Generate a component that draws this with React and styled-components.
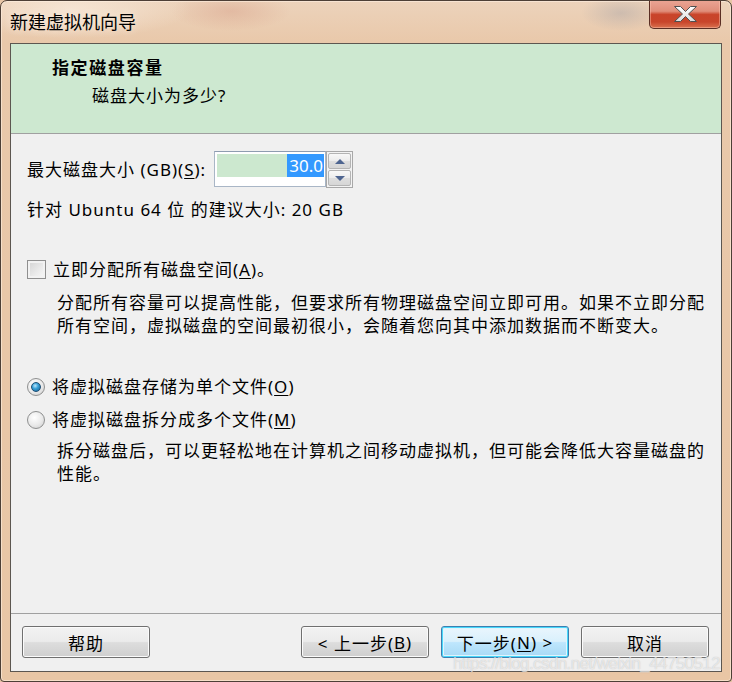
import styled, { createGlobalStyle, css } from "styled-components";

const GlobalStyle = createGlobalStyle`
    html, body {
        margin: 0;
        padding: 0;
        background: #e8c6a6;
    }
    * {
        box-sizing: border-box;
    }
`

const FONT = `"Noto Sans", "Noto Sans CJK SC", sans-serif`

const App = () => {
    return (
        <>
            <GlobalStyle />
            <Window>
                <TitleBar>
                    <Title>新建虚拟机向导</Title>
                    <CloseButton aria-label="close">
                        <svg width="25" height="18" viewBox="0 0 25 18">
                            <defs>
                                <linearGradient id="xg" x1="0" y1="0" x2="0" y2="1">
                                    <stop offset="0" stopColor="#ffffff" />
                                    <stop offset="1" stopColor="#dcdcdc" />
                                </linearGradient>
                            </defs>
                            <path
                                d="M1.5 1.5 H7.5 L12.5 6.5 L17.5 1.5 H23.5 L15.5 9 L23.5 16.5 H17.5 L12.5 11.5 L7.5 16.5 H1.5 L9.5 9 Z"
                                fill="url(#xg)"
                                stroke="#505050"
                                strokeWidth="1"
                                strokeLinejoin="round"
                            />
                        </svg>
                    </CloseButton>
                </TitleBar>

                <Client>
                    <Header>
                        <HeaderTitle>指定磁盘容量</HeaderTitle>
                        <HeaderSub>磁盘大小为多少?</HeaderSub>
                    </Header>

                    <Body>
                        <SizeRow>
                            <SizeLabel>最大磁盘大小 (GB)(<u>S</u>):</SizeLabel>
                            <SpinBox>
                                <Field>
                                    <FieldValue>
                                        <Selected>30.0</Selected>
                                    </FieldValue>
                                </Field>
                                <Spin>
                                    <SpinBtn><Arrow $dir="up" /></SpinBtn>
                                    <SpinBtn><Arrow $dir="down" /></SpinBtn>
                                </Spin>
                            </SpinBox>
                        </SizeRow>

                        <Suggest>针对 Ubuntu 64 位 的建议大小: 20 GB</Suggest>

                        <OptionRow style={{ marginTop: '37px' }}>
                            <CheckBox />
                            <span>立即分配所有磁盘空间(<u>A</u>)。</span>
                        </OptionRow>
                        <Note>
                            <Line>分配所有容量可以提高性能，但要求所有物理磁盘空间立即可用。如果不立即分配</Line>
                            <Line>所有空间，虚拟磁盘的空间最初很小，会随着您向其中添加数据而不断变大。</Line>
                        </Note>

                        <OptionRow style={{ marginTop: '38px' }}>
                            <Radio $checked />
                            <span>将虚拟磁盘存储为单个文件(<u>O</u>)</span>
                        </OptionRow>
                        <OptionRow style={{ marginTop: '10px' }}>
                            <Radio />
                            <span>将虚拟磁盘拆分成多个文件(<u>M</u>)</span>
                        </OptionRow>
                        <Note style={{ marginTop: '8px' }}>
                            <Line>拆分磁盘后，可以更轻松地在计算机之间移动虚拟机，但可能会降低大容量磁盘的</Line>
                            <Line>性能。</Line>
                        </Note>
                    </Body>

                    <Footer>
                        <Button>帮助</Button>
                        <RightButtons>
                            <Button>&lt; 上一步(<u>B</u>)</Button>
                            <Button $focused>下一步(<u>N</u>) &gt;</Button>
                            <Button>取消</Button>
                        </RightButtons>
                    </Footer>
                </Client>

                <Watermark>https://blog.csdn.net/weixin_44750512</Watermark>
            </Window>
        </>
    )
}

const Window = styled.div`
    position: relative;
    width: 732px;
    height: 682px;
    border: 1px solid #4d3f36;
    border-radius: 7px 7px 4px 4px;
    background:
        radial-gradient(ellipse 120px 30px at 70px 8px, rgba(250, 236, 222, 0.7), transparent),
        radial-gradient(ellipse 60px 20px at 230px 10px, rgba(200, 120, 100, 0.25), transparent),
        radial-gradient(ellipse 40px 18px at 620px 12px, rgba(150, 150, 160, 0.35), transparent),
        linear-gradient(to bottom, #ecd3bb 0px, #e9c8aa 42px, #e9c6a5 100%);
    box-shadow: inset 0 0 0 1px rgba(255, 240, 225, 0.6);
    display: flex;
    flex-direction: column;
    font-family: ${FONT};
    overflow: hidden;
`

const TitleBar = styled.div`
    height: 42px;
    display: flex;
    align-items: flex-start;
    padding-left: 9px;
`

const Title = styled.div`
    font-size: 18px;
    line-height: 42px;
    color: #000;
    text-shadow: 0 0 8px rgba(255, 245, 235, 0.9);
`

const CloseButton = styled.div`
    margin-left: auto;
    margin-right: 10px;
    margin-top: -1px;
    width: 72px;
    height: 29px;
    border: 1px solid #5a2e24;
    border-top: none;
    border-radius: 0 0 5px 5px;
    background: linear-gradient(
        to bottom,
        #eba595 0%,
        #e08e7a 40%,
        #c9442a 52%,
        #c8452b 78%,
        #d9714f 100%
    );
    box-shadow: inset 0 0 0 1px rgba(255, 200, 180, 0.45);
    display: flex;
    align-items: center;
    justify-content: center;
`

const Client = styled.div`
    margin: 0 9px;
    height: 629px;
    border: 1px solid #5c5650;
    background: #f0f0f0;
    display: flex;
    flex-direction: column;
`

const Header = styled.div`
    height: 90px;
    background: #cde8d0;
    border-bottom: 1px solid #a0a0a0;
    padding: 12px 0 0 41px;
`

const HeaderTitle = styled.div`
    font-size: 17px;
    font-weight: 700;
    line-height: 23px;
    letter-spacing: 1.6px;
    color: #000;
`

const HeaderSub = styled.div`
    margin-top: 5px;
    margin-left: 40px;
    font-size: 17px;
    line-height: 23px;
    letter-spacing: 1px;
    color: #000;
`

const Body = styled.div`
    flex: 1;
    padding: 17px 0 0 16px;
    font-size: 17px;
    letter-spacing: 1px;
    color: #000;

    u {
        text-underline-offset: 2px;
    }
`

const SizeRow = styled.div`
    display: flex;
    align-items: center;
    height: 36px;
`

const SizeLabel = styled.div`
    width: 187px;
    line-height: 23px;
    white-space: nowrap;
`

const SpinBox = styled.div`
    display: flex;
    height: 36px;
`

const Field = styled.div`
    width: 112px;
    height: 36px;
    border: 1px solid #a9b6c6;
    border-top-color: #8e9cb0;
    background: #fff;
    padding: 2px 1px 0 2px;
`

const FieldValue = styled.div`
    height: 23px;
    background: #cce8cf;
    display: flex;
    justify-content: flex-end;
`

const Selected = styled.span`
    background: #3399ff;
    color: #fff;
    line-height: 23px;
    padding: 0 1px 0 2px;
    letter-spacing: 0;
`

const Spin = styled.div`
    width: 27px;
    height: 37px;
    border: 1px solid #a8a8a8;
    display: flex;
    flex-direction: column;
    gap: 1px;
    padding: 1px;
    background: #f3f3f3;
`

const SpinBtn = styled.div`
    flex: 1;
    border: 1px solid #b4b4b4;
    border-radius: 2px;
    background: linear-gradient(to bottom, #f8f8f8 0%, #ececec 50%, #dedede 51%, #d6d6d6 100%);
    display: flex;
    align-items: center;
    justify-content: center;
`

const Arrow = styled.span`
    width: 0;
    height: 0;
    border-left: 5px solid transparent;
    border-right: 5px solid transparent;
    ${props => props.$dir === 'up'
        ? css`border-bottom: 5px solid #4e6590;`
        : css`border-top: 5px solid #4e6590;`}
`

const Suggest = styled.div`
    margin-top: 11px;
    line-height: 23px;
`

const OptionRow = styled.div`
    display: flex;
    align-items: center;
    gap: 7px;
    height: 23px;
    line-height: 23px;
    white-space: nowrap;
`

const CheckBox = styled.span`
    width: 19px;
    height: 19px;
    border: 1px solid #8f8f8f;
    background: linear-gradient(135deg, #d2d2d2 0%, #ebebeb 60%, #f8f8f8 100%);
    box-shadow: inset 0 0 0 2px #f2f2f2;
    flex-shrink: 0;
`

const Radio = styled.span`
    position: relative;
    width: 18px;
    height: 18px;
    border-radius: 50%;
    border: 1px solid #8e8f8f;
    background: radial-gradient(circle at 40% 35%, #ffffff 0%, #e9e9e9 55%, #c9c9c9 100%);
    flex-shrink: 0;

    ${props => props.$checked && css`
        &::after {
            content: '';
            position: absolute;
            left: 3px;
            top: 3px;
            width: 10px;
            height: 10px;
            border-radius: 50%;
            border: 1px solid #1d4e74;
            background: radial-gradient(circle at 40% 35%, #bfe6fb 0%, #3aa3d9 40%, #165c8e 100%);
            box-sizing: border-box;
        }
    `}
`

const Note = styled.div`
    margin-top: 10px;
    margin-left: 30px;
    line-height: 23px;
`

const Line = styled.div`
    white-space: nowrap;
`

const Footer = styled.div`
    height: 58px;
    border-top: 1px solid #a0a0a0;
    padding: 12px 12px 0 11px;
    display: flex;
    justify-content: space-between;
    align-items: flex-start;
`

const RightButtons = styled.div`
    display: flex;
    gap: 12px;
`

const Button = styled.div`
    width: 128px;
    height: 32px;
    border: 1px solid #707070;
    border-radius: 3px;
    background: linear-gradient(to bottom, #f2f2f2 0%, #ebebeb 48%, #dddddd 52%, #cfcfcf 100%);
    box-shadow: inset 0 0 0 1px #fbfbfb;
    display: flex;
    align-items: center;
    justify-content: center;
    font-size: 17px;
    letter-spacing: 1px;
    color: #000;
    white-space: nowrap;

    u {
        text-underline-offset: 2px;
    }

    ${props => props.$focused && css`
        border-color: #3c7fb1;
        background: linear-gradient(to bottom, #eaf6fd 0%, #d9f0fc 48%, #bee6fd 52%, #a7d9f5 100%);
        box-shadow: inset 0 0 0 1px #48d8fb, inset 0 0 0 2px #e0f4fd;
    `}
`

const Watermark = styled.div`
    position: absolute;
    left: 452px;
    top: 654px;
    font-family: "Liberation Sans", sans-serif;
    font-size: 17px;
    line-height: 17px;
    letter-spacing: -0.6px;
    color: rgba(255, 255, 255, 0.6);
    text-shadow: 0 0 1px rgba(140, 140, 140, 0.55);
    white-space: nowrap;
    pointer-events: none;
`

export default App;
